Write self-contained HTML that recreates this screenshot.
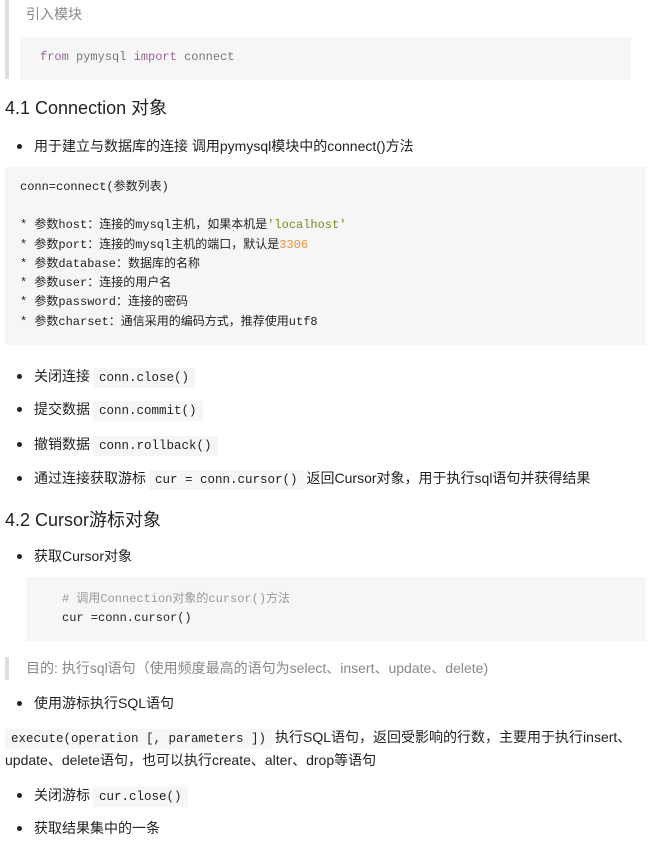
<!DOCTYPE html>
<html><head><meta charset="utf-8"><style>
body{margin:0;width:654px;height:841px;background:#fff;position:relative;overflow:hidden;font-family:"Liberation Sans","Noto Sans CJK SC",sans-serif;color:#222;font-size:14px}
.a{position:absolute;white-space:nowrap;line-height:20px}
.m{font-family:"Liberation Mono","Noto Sans CJK SC",monospace;font-size:12px}
.box{position:absolute;background:#f6f6f6}
.bar{position:absolute;background:#dddddd;width:4px}
.ic{background:#f6f6f6;padding:3px 6px;font-family:"Liberation Mono","Noto Sans CJK SC",monospace;font-size:12.5px;margin:0 3px}
.dot{position:absolute;width:5px;height:5px;border-radius:50%;background:#222}
h2{margin:0;font-weight:normal;font-size:18px}
</style></head><body>
<div class="bar" style="left:5px;top:0;height:79px"></div>
<div class="a" style="left:26px;top:4px;color:#888">引入模块</div>
<div class="box" style="left:20px;top:37px;width:611px;height:43px"></div>
<div class="a m" style="left:40px;top:47px;color:#777"><span style="color:#a0619a">from</span> pymysql <span style="color:#a0619a">import</span> connect</div>

<div class="a" style="left:5px;top:97px;font-size:18px;line-height:22px">4.1 Connection 对象</div>
<div class="dot" style="left:17px;top:144px"></div>
<div class="a" style="left:34px;top:136px">用于建立与数据库的连接 调用pymysql模块中的connect()方法</div>

<div class="box" style="left:5px;top:167px;width:641px;height:178px"></div>
<div class="a m" style="left:20px;top:177px">conn=connect(参数列表)</div>
<div class="a m" style="left:20px;top:215px">* 参数host：连接的mysql主机，如果本机是<span style="color:#7a8a1a">'localhost'</span></div>
<div class="a m" style="left:20px;top:235px">* 参数port：连接的mysql主机的端口，默认是<span style="color:#f0903a">3306</span></div>
<div class="a m" style="left:20px;top:254px">* 参数database：数据库的名称</div>
<div class="a m" style="left:20px;top:273px">* 参数user：连接的用户名</div>
<div class="a m" style="left:20px;top:292px">* 参数password：连接的密码</div>
<div class="a m" style="left:20px;top:312px">* 参数charset：通信采用的编码方式，推荐使用utf8</div>

<div class="dot" style="left:17px;top:374px"></div>
<div class="a" style="left:34px;top:366px">关闭连接<span class="ic">conn.close()</span></div>
<div class="dot" style="left:17px;top:407px"></div>
<div class="a" style="left:34px;top:399px">提交数据<span class="ic">conn.commit()</span></div>
<div class="dot" style="left:17px;top:442px"></div>
<div class="a" style="left:34px;top:434px">撤销数据<span class="ic">conn.rollback()</span></div>
<div class="dot" style="left:17px;top:476px"></div>
<div class="a" style="left:34px;top:468px">通过连接获取游标<span class="ic">cur = conn.cursor()</span>返回Cursor对象，用于执行sql语句并获得结果</div>

<div class="a" style="left:5px;top:509px;font-size:18px;line-height:22px">4.2 Cursor游标对象</div>
<div class="dot" style="left:17px;top:554px"></div>
<div class="a" style="left:34px;top:546px">获取Cursor对象</div>
<div class="box" style="left:26px;top:577px;width:620px;height:64px"></div>
<div class="a m" style="left:62px;top:589px;color:#999"># 调用Connection对象的cursor()方法</div>
<div class="a m" style="left:62px;top:608px">cur =conn.cursor()</div>

<div class="bar" style="left:5px;top:657px;height:23px"></div>
<div class="a" style="left:26px;top:658px;color:#888">目的: 执行sql语句（使用频度最高的语句为select、insert、update、delete)</div>
<div class="dot" style="left:17px;top:701px"></div>
<div class="a" style="left:34px;top:693px">使用游标执行SQL语句</div>
<div class="a" style="left:2px;top:727px"><span class="ic">execute(operation [, parameters ])</span>执行SQL语句，返回受影响的行数，主要用于执行insert、</div>
<div class="a" style="left:5px;top:750px">update、delete语句，也可以执行create、alter、drop等语句</div>
<div class="dot" style="left:17px;top:793px"></div>
<div class="a" style="left:34px;top:785px">关闭游标<span class="ic">cur.close()</span></div>
<div class="dot" style="left:17px;top:826px"></div>
<div class="a" style="left:34px;top:818px">获取结果集中的一条</div>
</body></html>
